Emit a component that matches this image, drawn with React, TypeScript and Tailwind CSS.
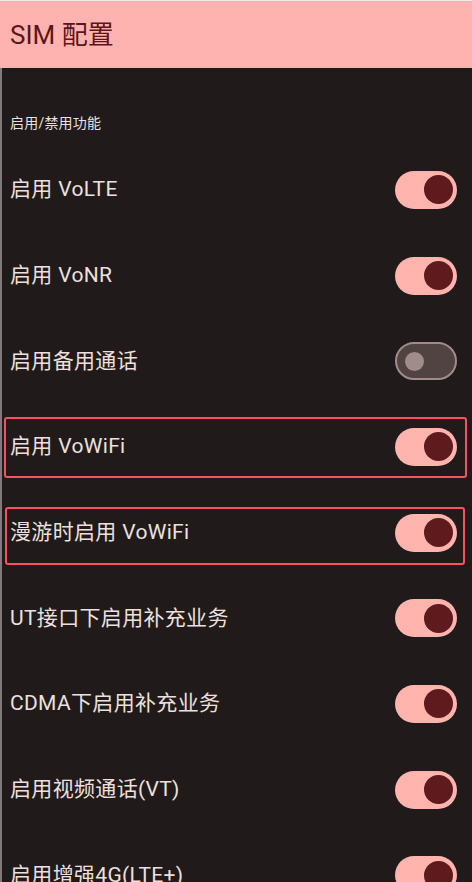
import React from "react";

type Row = { label: string; on: boolean; mark?: "a" | "b" };

const rows: Row[] = [
  { label: "启用 VoLTE", on: true },
  { label: "启用 VoNR", on: true },
  { label: "启用备用通话", on: false },
  { label: "启用 VoWiFi", on: true, mark: "a" },
  { label: "漫游时启用 VoWiFi", on: true, mark: "b" },
  { label: "UT接口下启用补充业务", on: true },
  { label: "CDMA下启用补充业务", on: true },
  { label: "启用视频通话(VT)", on: true },
  { label: "启用增强4G(LTE+)", on: true },
];

function Toggle({ on }: { on: boolean }) {
  if (on) {
    return (
      <div className="flex h-[38px] w-[62px] shrink-0 items-center justify-end rounded-full bg-[#ffb4ae] pr-[4.5px]">
        <div className="h-[29px] w-[29px] rounded-full bg-[#5e1a1d]" />
      </div>
    );
  }
  return (
    <div className="flex h-[38px] w-[62px] shrink-0 items-center rounded-full border-2 border-[#a08c8a] bg-[#524343] pl-[7.5px]">
      <div className="h-[19px] w-[19px] rounded-full bg-[#a08c8a]" />
    </div>
  );
}

export default function App() {
  return (
    <div
      className="h-[882px] w-[472px] overflow-hidden bg-[#201a1a]"
      style={{ fontFamily: 'Roboto, "Noto Sans CJK SC", sans-serif' }}
    >
      <header className="flex h-[68px] items-center border-t border-[#f3e6e5] bg-[#ffb3b0] pl-[10px]">
        <h1 className="text-[26px] leading-none text-[#5c1519]">SIM 配置</h1>
      </header>
      <main className="h-[814px] border-l-2 border-[#837b7a] pl-[8px] pr-[15px] pt-[45px]">
        <div className="h-[20px] text-[14px] leading-[20px] tracking-[0.2px] text-[#ede0de]">
          启用/禁用功能
        </div>
        <div className="mt-[14px]">
          {rows.map((r) => (
            <div key={r.label} className="relative flex h-[85.7px] items-center justify-between">
              <span className="text-[21px] leading-none tracking-[0.33px] text-[#ede0de]">{r.label}</span>
              <Toggle on={r.on} />
              {r.mark === "a" && (
                <div className="pointer-events-none absolute left-[-6px] right-[-10px] top-[13px] h-[61px] rounded-[3px] border-[2.5px] border-[#f6525f]" />
              )}
              {r.mark === "b" && (
                <div className="pointer-events-none absolute left-[-5px] right-[-8px] top-[17px] h-[58px] rounded-[3px] border-[2.5px] border-[#f6525f]" />
              )}
            </div>
          ))}
        </div>
      </main>
    </div>
  );
}
